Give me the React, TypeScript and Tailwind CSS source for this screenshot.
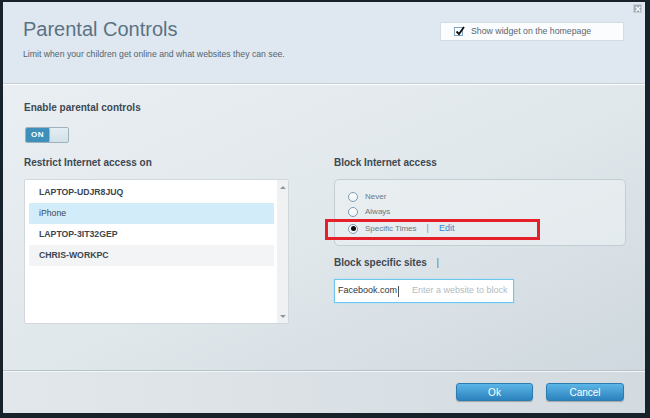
import React from "react";

const devices = [
  { name: "LAPTOP-UDJR8JUQ", bg: "", bold: true },
  { name: "iPhone", bg: "bg-[#d2ecf9]", bold: false },
  { name: "LAPTOP-3IT32GEP", bg: "", bold: true },
  { name: "CHRIS-WORKPC", bg: "bg-[#f3f4f5]", bold: true },
];

function Radio({ checked }: { checked?: boolean }) {
  return (
    <span className="w-[10px] h-[10px] rounded-full border border-[#7d9cb5] bg-gradient-to-b from-white to-[#eef2f5] flex items-center justify-center shrink-0">
      {checked && <span className="w-[5px] h-[5px] rounded-full bg-[#0c0c0c]" />}
    </span>
  );
}

export default function App() {
  return (
    <div className="w-[650px] h-[418px] bg-[#18222b] pt-[2px] pl-[3px] font-['Liberation_Sans',Arial,sans-serif]">
      <div className="relative w-[642px] h-[411px] flex flex-col overflow-hidden">
        {/* header */}
        <div className="h-[82px] shrink-0 bg-[#dfe8f0] border-b border-[#c4ced6] flex justify-between pl-[20px] pr-[21px]">
          <div>
            <h1 className="pt-[15px] text-[20px] leading-[24px] text-[#5b7283]">Parental Controls</h1>
            <p className="mt-[8px] text-[8.7px] leading-[11px] text-[#55636f]">
              Limit when your children get online and what websites they can see.
            </p>
          </div>
          <div className="mt-[20px] w-[184px] h-[19px] bg-[#fbfcfd] border border-[#d3dce3] flex items-center pl-[13px]">
            <span className="relative w-[9px] h-[9px] border border-[#7fa3bf] bg-white shrink-0">
              <svg viewBox="0 0 10 10" className="absolute -top-[2px] left-0 w-[10px] h-[10px]">
                <path d="M1.5 5.5 L4 8 L9 1" fill="none" stroke="#111" strokeWidth="1.8" />
              </svg>
            </span>
            <span className="ml-[8px] text-[8.75px] text-[#5a6570]">Show widget on the homepage</span>
          </div>
        </div>

        {/* close */}
        <div className="absolute top-[2px] left-[630px] w-[9px] h-[9px] bg-[#a2acb4] border border-[#c8d0d6] flex items-center justify-center">
          <svg viewBox="0 0 8 8" className="w-[6px] h-[6px]">
            <path d="M1 1 L7 7 M7 1 L1 7" stroke="#fff" strokeWidth="1.6" />
          </svg>
        </div>

        {/* body */}
        <div className="h-[286px] shrink-0 border-t border-white bg-linear-to-br from-[#e9eef2] via-[#e1e8ec] to-[#cfd8de] pl-[21px] pt-[17px]">
          <h2 className="text-[10px] leading-[12px] font-bold text-[#3d4852]">Enable parental controls</h2>
          <div className="mt-[13px] ml-[1px] w-[44px] h-[16px] flex rounded-[2px] overflow-hidden border border-[#9fb1bd]">
            <div className="w-[23px] bg-[#3e8fba] flex items-center justify-center text-[8px] font-bold text-white tracking-[0.5px]">
              ON
            </div>
            <div className="flex-1 bg-gradient-to-b from-[#e4eef3] to-[#d2e0e8] border-l border-[#9fb1bd] rounded-[2px]" />
          </div>

          <div className="mt-[14px] grid grid-cols-[265px_292px] gap-x-[45px]">
            {/* left column */}
            <div>
              <h2 className="text-[10px] leading-[12px] font-bold text-[#3d4852]">Restrict Internet access on</h2>
              <div className="mt-[10px] h-[145px] bg-white border border-[#d0d8de] rounded-[2px] flex">
                <div className="flex-1 pt-[2px] pl-[4px] pr-[3px]">
                  {devices.map((d) => (
                    <div
                      key={d.name}
                      className={`h-[21px] flex items-center pl-[10px] text-[8.7px] text-[#3a4650] ${d.bg} ${
                        d.bold ? "font-bold" : "font-normal"
                      }`}
                    >
                      {d.name}
                    </div>
                  ))}
                </div>
                <div className="w-[11px] bg-[#f0f1f2] flex flex-col items-center justify-between pt-[6px] pb-[5px]">
                  <span className="w-0 h-0 border-l-[3px] border-r-[3px] border-b-[3px] border-l-transparent border-r-transparent border-b-[#8f989f]" />
                  <span className="w-0 h-0 border-l-[3px] border-r-[3px] border-t-[3px] border-l-transparent border-r-transparent border-t-[#8f989f]" />
                </div>
              </div>
            </div>

            {/* right column */}
            <div className="relative">
              <h2 className="text-[10px] leading-[12px] font-bold text-[#3d4852]">Block Internet access</h2>
              <div className="mt-[10px] h-[67px] border border-[#c3cdd4] rounded-[5px] bg-[#edf1f4]/60 pl-[13px] pt-[9px]">
                <div className="h-[15px] flex items-center gap-[7px] text-[8px] text-[#6b7680]">
                  <Radio />
                  <span>Never</span>
                </div>
                <div className="h-[15px] flex items-center gap-[7px] text-[8px] text-[#6b7680]">
                  <Radio />
                  <span>Always</span>
                </div>
                <div className="mt-[2px] h-[15px] flex items-center gap-[7px] text-[8px] text-[#6b7680]">
                  <Radio checked />
                  <span>Specific Times</span>
                  <span className="ml-[3px] text-[9px] text-[#8a949c]">|</span>
                  <span className="ml-[3px] text-[9px] text-[#3a87cc]">Edit</span>
                </div>
              </div>
              <h2 className="mt-[11px] text-[10px] leading-[12px] font-bold text-[#3d4852]">
                Block specific sites <span className="ml-[7px] font-normal text-[#6b7680]">|</span>
              </h2>
              <div className="mt-[10px] w-[180px] h-[24px] bg-white border border-[#6cc8ec] shadow-[0_0_2px_#9fdcf5] flex items-center pl-[3px] whitespace-nowrap overflow-hidden">
                <span className="text-[9px] text-[#2e343b]">Facebook.com</span>
                <span className="ml-[1px] w-[1px] h-[11px] bg-[#555]" />
                <span className="ml-[13px] text-[9px] text-[#b3bbc2]">Enter a website to block</span>
              </div>

              {/* annotation */}
              <div className="absolute left-[-9px] top-[62px] w-[215px] h-[21px] border-[3px] border-[#e6202b]" />
            </div>
          </div>
        </div>

        {/* footer */}
        <div className="h-[43px] shrink-0 border-t border-[#b7c1c8] shadow-[inset_0_1px_0_#f3f6f8] bg-linear-to-r from-[#e2e7eb] to-[#d3dbe0] flex justify-end items-start pt-[12px] pr-[21px] gap-[13px]">
          <button className="w-[77px] h-[18px] rounded-[3px] border border-[#2d7cb1] bg-gradient-to-b from-[#5cb6e7] to-[#2c82bd] shadow-[0_1px_1px_rgba(0,0,0,0.25)] text-[10px] text-white">
            Ok
          </button>
          <button className="w-[78px] h-[18px] rounded-[3px] border border-[#2d7cb1] bg-gradient-to-b from-[#5cb6e7] to-[#2c82bd] shadow-[0_1px_1px_rgba(0,0,0,0.25)] text-[10px] text-white">
            Cancel
          </button>
        </div>
      </div>
    </div>
  );
}
